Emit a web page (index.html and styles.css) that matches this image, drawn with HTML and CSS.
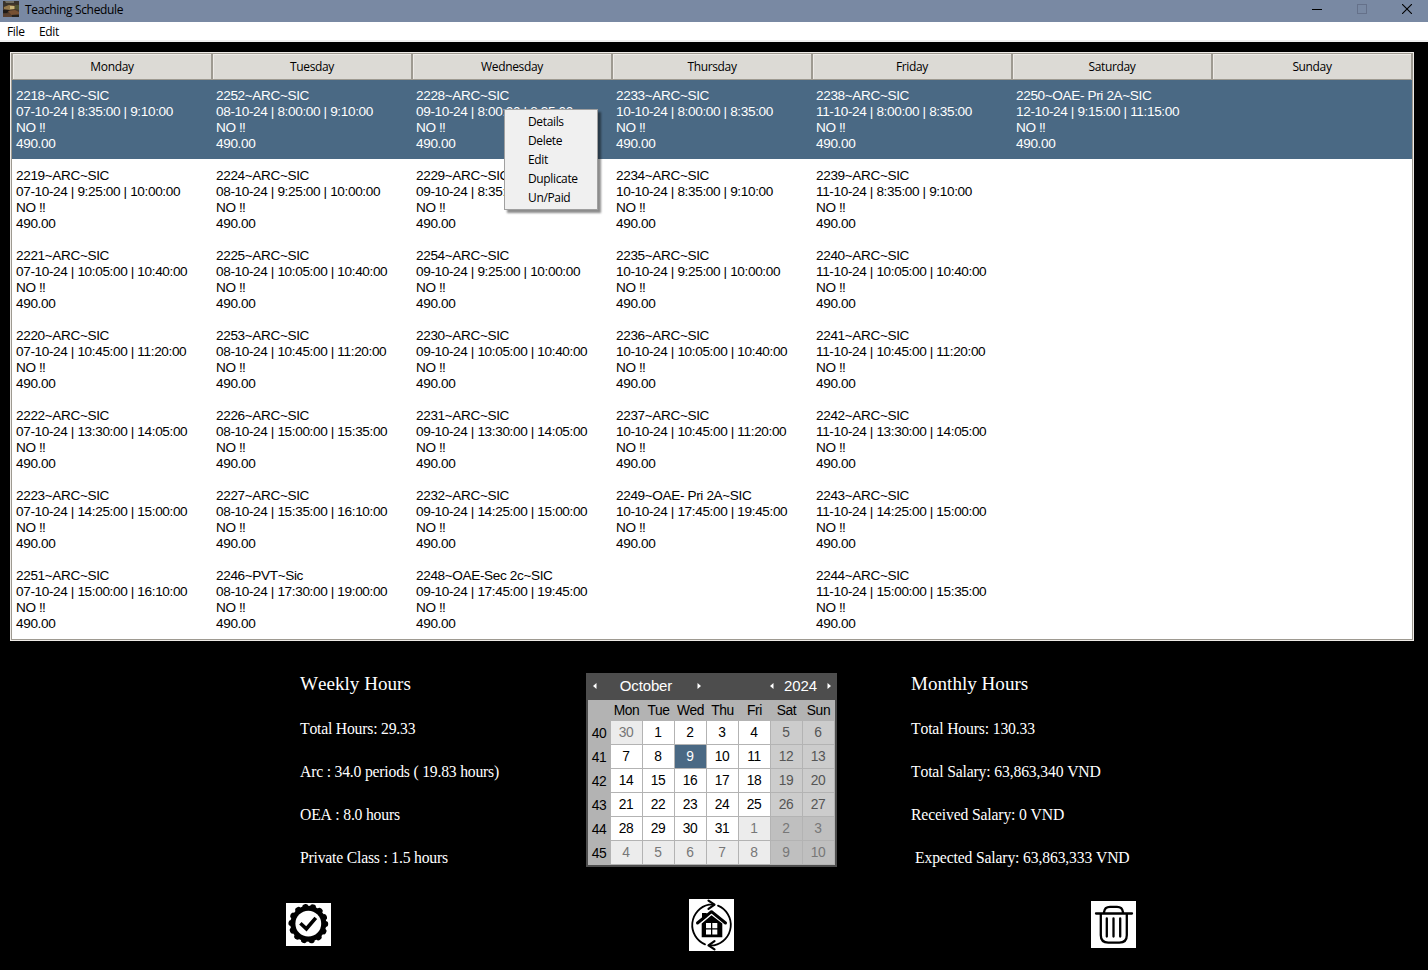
FILE: index.html
```
<!DOCTYPE html>
<html lang="en">
<head>
<meta charset="utf-8">
<title>Teaching Schedule</title>
<link rel="stylesheet" href="styles.css">
</head>
<body>
<header class="titlebar">
  <svg class="app-icon" width="16" height="16" viewBox="0 0 16 16"><rect width="16" height="16" fill="#47392b"/><path d="M0 0h16v4L11 3 6 4 0 6z" fill="#39332b"/><path d="M2 0h9v2H3z" fill="#716e62"/><path d="M1 6l5-2 6 1v3l-5 1-6-1z" fill="#94794b"/><path d="M7 5h4v3H7z" fill="#c9b77a"/><path d="M12 4h4v5l-4-1z" fill="#4f5231"/><path d="M0 9h7l-3 3H0z" fill="#201b17"/><path d="M5 10l7-1 4 2v2l-8 1z" fill="#775133"/><path d="M0 13l7-1 2 4H0z" fill="#59402f"/><path d="M9 14h7v2H9z" fill="#26211c"/></svg>
  <span class="title">Teaching Schedule</span>
  <div class="controls">
    <svg width="10" height="10" viewBox="0 0 10 10"><path d="M0 5.5h10" stroke="#000"/></svg>
    <svg width="10" height="10" viewBox="0 0 10 10"><rect x=".5" y=".5" width="9" height="9" fill="none" stroke="#65718a"/></svg>
    <svg width="10" height="10" viewBox="0 0 10 10"><path d="M0 0l10 10M10 0L0 10" stroke="#000" stroke-width="1.1"/></svg>
  </div>
</header>
<nav class="menubar"><span class="m-file">File</span><span>Edit</span></nav>
<main>
  <section class="table">
    <div class="thead"><div>Monday</div><div>Tuesday</div><div>Wednesday</div><div>Thursday</div><div>Friday</div><div>Saturday</div><div>Sunday</div></div>
    <div class="row selected">
      <div>2218~ARC~SIC
07-10-24 | 8:35:00 | 9:10:00
NO ‼
490.00</div>
      <div>2252~ARC~SIC
08-10-24 | 8:00:00 | 9:10:00
NO ‼
490.00</div>
      <div>2228~ARC~SIC
09-10-24 | 8:00:00 | 8:35:00
NO ‼
490.00</div>
      <div>2233~ARC~SIC
10-10-24 | 8:00:00 | 8:35:00
NO ‼
490.00</div>
      <div>2238~ARC~SIC
11-10-24 | 8:00:00 | 8:35:00
NO ‼
490.00</div>
      <div>2250~OAE- Pri 2A~SIC
12-10-24 | 9:15:00 | 11:15:00
NO ‼
490.00</div>
      <div></div>
    </div>
    <div class="row">
      <div>2219~ARC~SIC
07-10-24 | 9:25:00 | 10:00:00
NO ‼
490.00</div>
      <div>2224~ARC~SIC
08-10-24 | 9:25:00 | 10:00:00
NO ‼
490.00</div>
      <div>2229~ARC~SIC
09-10-24 | 8:35:00 | 9:10:00
NO ‼
490.00</div>
      <div>2234~ARC~SIC
10-10-24 | 8:35:00 | 9:10:00
NO ‼
490.00</div>
      <div>2239~ARC~SIC
11-10-24 | 8:35:00 | 9:10:00
NO ‼
490.00</div>
      <div></div>
      <div></div>
    </div>
    <div class="row">
      <div>2221~ARC~SIC
07-10-24 | 10:05:00 | 10:40:00
NO ‼
490.00</div>
      <div>2225~ARC~SIC
08-10-24 | 10:05:00 | 10:40:00
NO ‼
490.00</div>
      <div>2254~ARC~SIC
09-10-24 | 9:25:00 | 10:00:00
NO ‼
490.00</div>
      <div>2235~ARC~SIC
10-10-24 | 9:25:00 | 10:00:00
NO ‼
490.00</div>
      <div>2240~ARC~SIC
11-10-24 | 10:05:00 | 10:40:00
NO ‼
490.00</div>
      <div></div>
      <div></div>
    </div>
    <div class="row">
      <div>2220~ARC~SIC
07-10-24 | 10:45:00 | 11:20:00
NO ‼
490.00</div>
      <div>2253~ARC~SIC
08-10-24 | 10:45:00 | 11:20:00
NO ‼
490.00</div>
      <div>2230~ARC~SIC
09-10-24 | 10:05:00 | 10:40:00
NO ‼
490.00</div>
      <div>2236~ARC~SIC
10-10-24 | 10:05:00 | 10:40:00
NO ‼
490.00</div>
      <div>2241~ARC~SIC
11-10-24 | 10:45:00 | 11:20:00
NO ‼
490.00</div>
      <div></div>
      <div></div>
    </div>
    <div class="row">
      <div>2222~ARC~SIC
07-10-24 | 13:30:00 | 14:05:00
NO ‼
490.00</div>
      <div>2226~ARC~SIC
08-10-24 | 15:00:00 | 15:35:00
NO ‼
490.00</div>
      <div>2231~ARC~SIC
09-10-24 | 13:30:00 | 14:05:00
NO ‼
490.00</div>
      <div>2237~ARC~SIC
10-10-24 | 10:45:00 | 11:20:00
NO ‼
490.00</div>
      <div>2242~ARC~SIC
11-10-24 | 13:30:00 | 14:05:00
NO ‼
490.00</div>
      <div></div>
      <div></div>
    </div>
    <div class="row">
      <div>2223~ARC~SIC
07-10-24 | 14:25:00 | 15:00:00
NO ‼
490.00</div>
      <div>2227~ARC~SIC
08-10-24 | 15:35:00 | 16:10:00
NO ‼
490.00</div>
      <div>2232~ARC~SIC
09-10-24 | 14:25:00 | 15:00:00
NO ‼
490.00</div>
      <div>2249~OAE- Pri 2A~SIC
10-10-24 | 17:45:00 | 19:45:00
NO ‼
490.00</div>
      <div>2243~ARC~SIC
11-10-24 | 14:25:00 | 15:00:00
NO ‼
490.00</div>
      <div></div>
      <div></div>
    </div>
    <div class="row">
      <div>2251~ARC~SIC
07-10-24 | 15:00:00 | 16:10:00
NO ‼
490.00</div>
      <div>2246~PVT~Sic
08-10-24 | 17:30:00 | 19:00:00
NO ‼
490.00</div>
      <div>2248~OAE-Sec 2c~SIC
09-10-24 | 17:45:00 | 19:45:00
NO ‼
490.00</div>
      <div></div>
      <div>2244~ARC~SIC
11-10-24 | 15:00:00 | 15:35:00
NO ‼
490.00</div>
      <div></div>
      <div></div>
    </div>
  </section>

  <section class="summary">
    <div class="stats weekly">
      <h2>Weekly Hours</h2>
      <p>Total Hours: 29.33</p>
      <p>Arc : 34.0 periods ( 19.83 hours)</p>
      <p>OEA : 8.0 hours</p>
      <p>Private Class : 1.5 hours</p>
    </div>
    <div class="calendar">
      <div class="cal-head">
        <svg width="4" height="6" viewBox="0 0 4 6"><path d="M3.5 0v6L0 3z" fill="#fff"/></svg>
        <span class="month">October</span>
        <svg width="4" height="6" viewBox="0 0 4 6"><path d="M.5 0v6L4 3z" fill="#fff"/></svg>
        <svg class="prev-year" width="4" height="6" viewBox="0 0 4 6"><path d="M3.5 0v6L0 3z" fill="#fff"/></svg>
        <span class="year">2024</span>
        <svg width="4" height="6" viewBox="0 0 4 6"><path d="M.5 0v6L4 3z" fill="#fff"/></svg>
      </div>
      <div class="cal-grid">
        <b></b><b>Mon</b><b>Tue</b><b>Wed</b><b>Thu</b><b>Fri</b><b>Sat</b><b>Sun</b>
        <b>40</b><i class="o">30</i><i>1</i><i>2</i><i>3</i><i>4</i><i class="we">5</i><i class="we">6</i>
        <b>41</b><i>7</i><i>8</i><i class="sel">9</i><i>10</i><i>11</i><i class="we">12</i><i class="we">13</i>
        <b>42</b><i>14</i><i>15</i><i>16</i><i>17</i><i>18</i><i class="we">19</i><i class="we">20</i>
        <b>43</b><i>21</i><i>22</i><i>23</i><i>24</i><i>25</i><i class="we">26</i><i class="we">27</i>
        <b>44</b><i>28</i><i>29</i><i>30</i><i>31</i><i class="o">1</i><i class="owe">2</i><i class="owe">3</i>
        <b>45</b><i class="o">4</i><i class="o">5</i><i class="o">6</i><i class="o">7</i><i class="o">8</i><i class="owe">9</i><i class="owe">10</i>
      </div>
    </div>
    <div class="stats monthly">
      <h2>Monthly Hours</h2>
      <p>Total Hours: 130.33</p>
      <p>Total Salary: 63,863,340 VND</p>
      <p>Received Salary: 0 VND</p>
      <p class="expected">Expected Salary: 63,863,333 VND</p>
    </div>
  </section>

  <section class="actions">
    <svg class="raised" width="45" height="43" viewBox="0 0 45 43"><rect width="45" height="43" fill="#fff"/><circle cx="22.3" cy="20.7" r="18"/><circle cx="22.3" cy="20.7" r="17.2" fill="none" stroke="#000" stroke-width="5.4" stroke-linecap="round" stroke-dasharray=".6 7.12"/><circle cx="22.3" cy="20.7" r="12.9" fill="#fff"/><path d="M15.700 21.500l4.700 4.300 8.200-9.500" fill="none" stroke="#000" stroke-width="3.600" stroke-linecap="square"/></svg>
    <svg width="45" height="52" viewBox="0 0 45 52"><rect width="45" height="52" fill="#fff"/><g fill="none" stroke="#000" stroke-width="1.800" stroke-linecap="round" stroke-linejoin="round"><path d="M16 45.300A20.800 20.800 0 0 1 20 5.700h5"/><path d="M29 6.700A20.800 20.800 0 0 1 25 46.300h-5"/><path d="M19.500 1.600l6 4.100-6 4.100M25.500 42.200l-6 4.100 6 4.100" stroke-width="2.200"/><path d="M8.500 24L22.500 12.700 36.500 24" stroke-width="3"/></g><path d="M13 14h4.700v4L13 22zM12.700 24.500l9.800-8.300 10.800 8.300v13.800H12.700z"/><path d="M17 24h5v5.200h-5zM23.300 24h5v5.200h-5zM17 30.400h5v5h-5zM23.300 30.400h5v5h-5z" fill="#fff"/></svg>
    <svg class="raised" width="45" height="47" viewBox="0 0 45 47"><rect width="45" height="47" fill="#fff"/><g fill="none" stroke="#000" stroke-width="2.300" stroke-linecap="round"><path d="M5 12.500h36M13 12v-.8q.6-5.400 6-5.400h7q5.400 0 6 5.400v.8M9.800 12.500v21.800q0 7.300 7.500 7.300h11q7.500 0 7.500-7.300V12.500M15.800 17.500v18M22.500 17.500v18M29.200 17.500v18"/></g></svg>
  </section>
</main>
<div class="context-menu"><span>Details</span><span>Delete</span><span>Edit</span><span>Duplicate</span><span>Un/Paid</span></div>
</body>
</html>
```
FILE: styles.css
```
* { box-sizing: border-box; }
body { margin: 0; width: 1428px; height: 970px; overflow: hidden; background: #000; color: #000; font: 12px "Open Sans", sans-serif; letter-spacing: -0.35px; font-kerning: none; }
svg { display: block; flex: none; }
.titlebar { display: flex; height: 22px; background: #7989a3; padding-left: 3px; }
.app-icon { margin-top: 1px; }
.title { margin-left: 6px; line-height: 20px; }
.controls { display: flex; gap: 35px; margin: 4px 16px 0 auto; }
.menubar { display: flex; height: 20px; background: #fff; border-bottom: 2px solid #f0f0f0; padding-left: 7px; line-height: 19px; }
.m-file { width: 32px; }
.table { margin: 10px 14px 0 10px; height: 589px; background: #fff; border: 2px solid #9e9a91; outline: 1px solid #eeebe7; outline-offset: -1px; }
.thead { display: grid; grid-template-columns: repeat(7, 200px); height: 25px; }
.thead div { background: #dcdad5; border: 1px solid #9e9a91; border-width: 0 1px 1px; box-shadow: inset 1px 1px #eeebe7; text-align: center; line-height: 25px; }
.row { display: grid; grid-template-columns: repeat(7, 200px); height: 80px; }
.row div { padding: 9px 0 0 4px; white-space: pre; font: 13.6px/16px "Liberation Sans", Arial, sans-serif; letter-spacing: -0.37px; }
.selected { background: #4a6984; color: #fff; }
.summary { display: flex; margin-top: 32px; padding-left: 300px; height: 194px; color: #fff; }
.stats { font-family: "Liberation Serif", "Times New Roman", serif; letter-spacing: 0; }
.weekly { width: 286px; }
.monthly { margin-left: 74px; }
.stats h2 { margin: 0; font-size: 19.1px; font-weight: 400; line-height: 22px; height: 34px; }
.stats p { margin: 0; font-size: 15.7px; line-height: 43px; white-space: pre; letter-spacing: -0.15px; }
.weekly p { letter-spacing: -0.2px; }
.monthly .expected { padding-left: 4px; }
.calendar { width: 251px; height: 194px; border: 2px solid #4d4d4d; border-top: 0; background: #b3b3b3; font: 13.8px "Liberation Sans", Arial, sans-serif; }
.cal-head { display: flex; align-items: center; height: 27px; background: #4d4d4d; padding: 0 4px 2px 5px; font-size: 15px; letter-spacing: -0.15px; }
.month { width: 100px; padding-right: 2px; text-align: center; }
.prev-year { margin-left: auto; }
.year { width: 53px; text-align: center; }
.cal-grid { display: grid; grid-template-columns: 23px repeat(7, 32px); grid-template-rows: 21px repeat(6, 24px); color: #000; letter-spacing: -0.4px; text-align: center; line-height: 23px; text-indent: -1px; }
.cal-grid b { font-weight: 400; line-height: 22px; }
.cal-grid b:nth-child(n+9) { line-height: 25px; }
.cal-grid i { font-style: normal; background: #fff; margin: 0 1px 1px 0; }
.cal-grid .o { background: #ececec; color: #777; }
.cal-grid .we { background: #ccc; color: #555; }
.cal-grid .owe { background: #bfbfbf; color: #777; }
.cal-grid .sel { background: #4a6984; color: #fff; }
.actions { display: flex; align-items: center; margin: 32px 0 0 286px; height: 52px; }
.actions .raised { margin-bottom: 2px; }
.actions svg:nth-child(2) { margin: 0 357px 0 358px; }
.context-menu { position: absolute; left: 504px; top: 109px; width: 94px; height: 101px; display: flex; flex-direction: column; padding: 2px 0 0 23px; background: #f0f0f0; border: 1px solid #a0a0a0; box-shadow: 3px 3px 2px rgba(0,0,0,.45); line-height: 19px; }
```
